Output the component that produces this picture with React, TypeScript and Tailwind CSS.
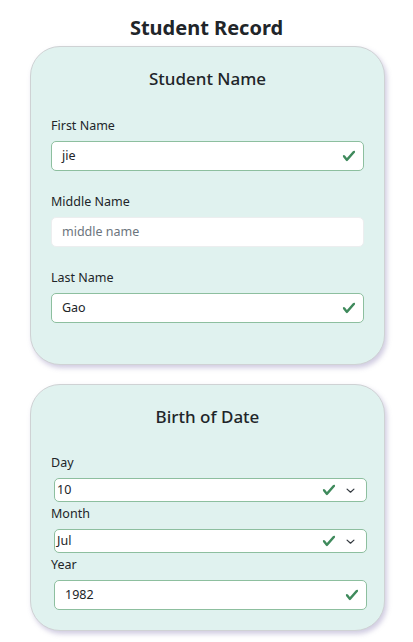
const font = { fontFamily: '"Noto Sans", "Open Sans", sans-serif' }

function Check({ className = '' }: { className?: string }) {
  return (
    <svg viewBox="0 0 8 8" className={className} aria-hidden>
      <path
        fill="#3f8a5c"
        d="M2.3 6.73.6 4.53c-.4-1.04.46-1.4 1.1-.8l1.1 1.4 3.4-3.8c.6-.63 1.6-.27 1.2.7l-4 4.6c-.43.5-.8.4-1.1.1z"
      />
    </svg>
  )
}

function Chevron() {
  return (
    <svg viewBox="0 0 16 16" className="h-[11px] w-[11px]" aria-hidden>
      <path d="m3 6 5 4.5 5-4.5" fill="none" stroke="#343a40" strokeWidth="1.8" strokeLinecap="round" strokeLinejoin="round" />
    </svg>
  )
}

type FieldProps = { label: string; value?: string; placeholder?: string; valid?: boolean }

function TextField({ label, value, placeholder, valid }: FieldProps) {
  return (
    <div className="flex flex-col">
      <label className="pt-[1px] text-[12.5px] leading-[18px] text-[#212529]">{label}</label>
      <div
        className={`mt-[6px] flex h-[30px] items-center rounded-[5px] border bg-white pl-[10px] pr-[7px] ${
          valid ? 'border-[#8dbf9f]' : 'border-[#eceeef]'
        }`}
      >
        <span className={`flex-1 text-[12.5px] ${value ? 'text-[#212529]' : 'text-[#6c757d]'}`}>
          {value || placeholder}
        </span>
        {valid && <Check className="h-[14px] w-[14px]" />}
      </div>
    </div>
  )
}

function SelectField({ label, value }: { label: string; value: string }) {
  return (
    <div className="flex flex-col">
      <label className="pt-[1px] text-[12.5px] leading-[18px] text-[#212529]">{label}</label>
      <div className="mt-[6px] ml-[3px] mr-[-3px] flex h-[24px] items-center rounded-[5px] border border-[#8dbf9f] bg-white pl-[2px] pr-[10px]">
        <span className="flex-1 text-[12.5px] text-[#212529]">{value}</span>
        <Check className="mr-[9px] h-[14px] w-[14px]" />
        <Chevron />
      </div>
    </div>
  )
}

function Card({ title, children, bottom }: { title: string; children: React.ReactNode; bottom: string }) {
  return (
    <div
      className={`ml-[30px] w-[355px] rounded-[30px] border border-[#cfd2d4] bg-[#e0f2ef] px-[20px] pt-[20px] shadow-[2px_3px_5px_rgba(120,110,170,0.35)] ${bottom}`}
    >
      <h2 className="text-center text-[17px] font-medium leading-[24px] text-[#212529]">{title}</h2>
      {children}
    </div>
  )
}

export default function App() {
  return (
    <div className="min-h-[642px] bg-white pb-4" style={font}>
      <h1 className="pt-[15px] text-center text-[20px] font-bold leading-[26px] text-[#212529]">Student Record</h1>
      <div className="mt-[5px]">
        <Card title="Student Name" bottom="pb-[41px]">
          <div className="mt-[25px] flex flex-col gap-[21px]">
            <TextField label="First Name" value="jie" valid />
            <TextField label="Middle Name" placeholder="middle name" />
            <TextField label="Last Name" value="Gao" valid />
          </div>
        </Card>
      </div>
      <div className="mt-[19px]">
        <Card title="Birth of Date" bottom="pb-[20px]">
          <div className="mt-[24px] flex flex-col gap-[2px]">
            <SelectField label="Day" value="10" />
            <SelectField label="Month" value="Jul" />
            <div className="flex flex-col">
              <label className="pt-[1px] text-[12.5px] leading-[18px] text-[#212529]">Year</label>
              <div className="mt-[6px] ml-[3px] mr-[-3px] flex h-[30px] items-center rounded-[5px] border border-[#8dbf9f] bg-white pl-[10px] pr-[7px]">
                <span className="flex-1 text-[12.5px] text-[#212529]">1982</span>
                <Check className="h-[14px] w-[14px]" />
              </div>
            </div>
          </div>
        </Card>
      </div>
    </div>
  )
}
